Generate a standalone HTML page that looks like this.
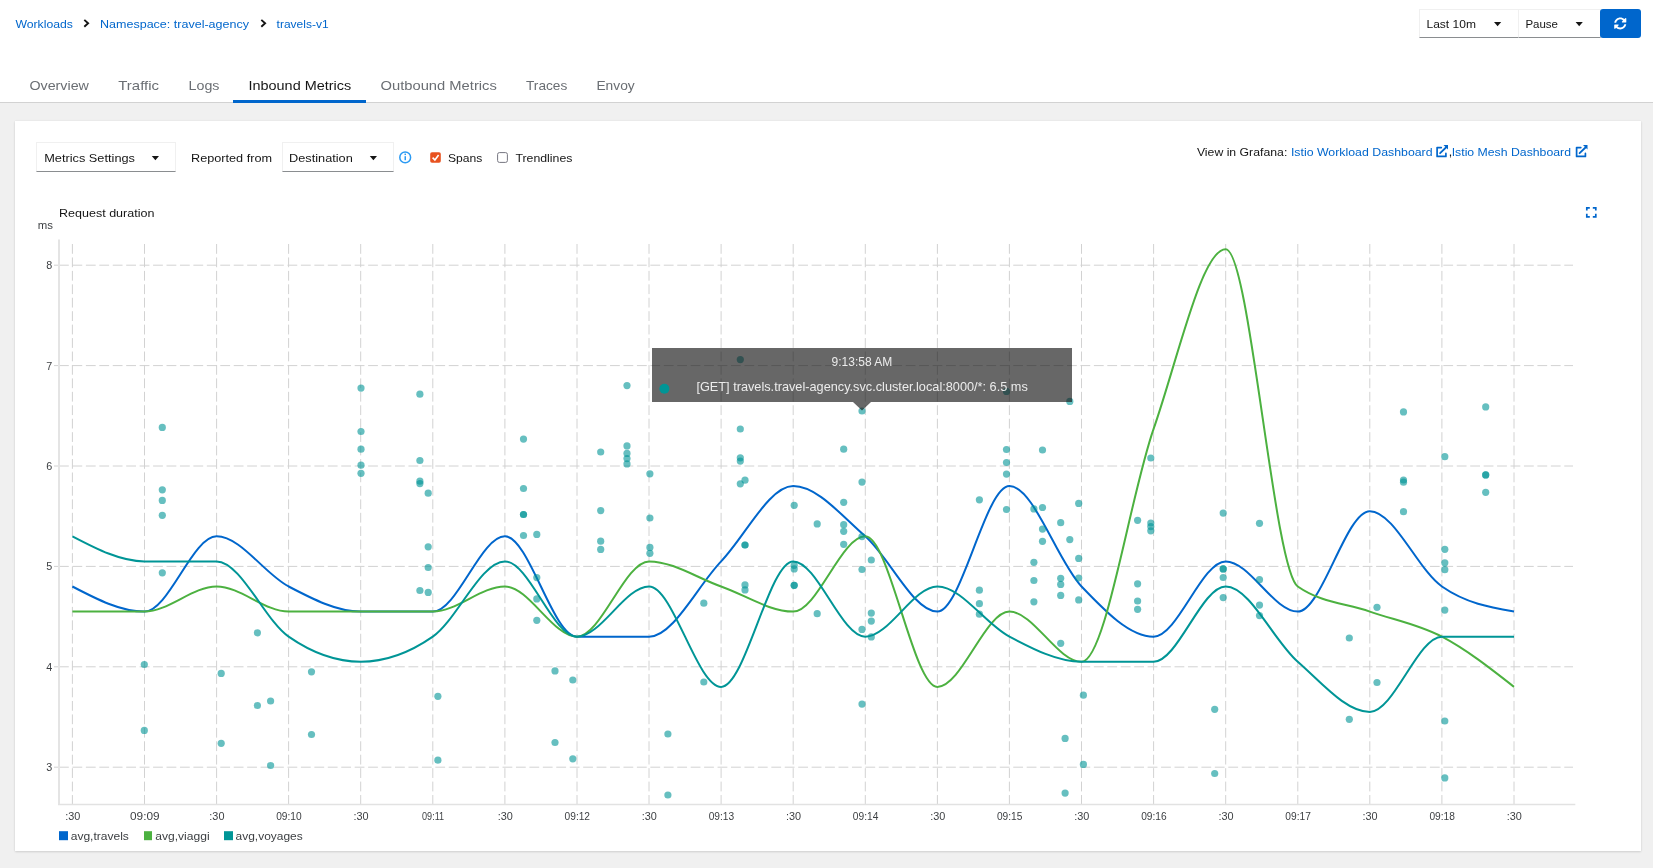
<!DOCTYPE html>
<html><head><meta charset="utf-8"><title>Kiali - travels-v1 Inbound Metrics</title>
<style>
html,body{margin:0;padding:0;}
body{width:1653px;height:868px;overflow:hidden;position:relative;background:#f0f0f0;font-family:"Liberation Sans",sans-serif;}
.top{position:absolute;left:0;top:0;width:1653px;height:102px;background:#fff;border-bottom:1px solid #d2d2d2;}
.card{position:absolute;left:15px;top:121px;width:1626px;height:730px;background:#fff;box-shadow:0 1px 2px rgba(3,3,3,0.12),0 0 2px rgba(3,3,3,0.06);}
.sel{position:absolute;box-sizing:border-box;background:#fff;border:1px solid #f0f0f0;border-bottom:1px solid #8a8d90;}
.btn{position:absolute;left:1600px;top:9px;width:41px;height:29px;background:#0066cc;border-radius:3px;}
.ulbar{position:absolute;left:233px;top:100px;width:133px;height:3px;background:#0066cc;}
svg.ov{position:absolute;left:0;top:0;will-change:transform;}
</style></head><body>
<div class="top"></div>
<div class="ulbar"></div>
<div class="card"></div>
<div class="sel" style="left:1419px;top:9px;width:100px;height:29px;border-right:1px solid #f0f0f0"></div>
<div class="sel" style="left:1518px;top:9px;width:83px;height:29px;"></div>
<div class="btn"></div>
<div class="sel" style="left:36px;top:142px;width:140px;height:30px;"></div>
<div class="sel" style="left:282px;top:142px;width:112px;height:30px;"></div>

<svg class="ov" width="1653" height="868" viewBox="0 0 1653 868" style="font-family:'Liberation Sans', sans-serif">
<text x="15.4" y="28.2" font-size="11.3" fill="#0066cc" text-anchor="start" font-weight="normal" textLength="57.6" lengthAdjust="spacingAndGlyphs">Workloads</text>
<path d="M84.3,19.9 L88.1,23.3 L84.3,26.7" fill="none" stroke="#151515" stroke-width="1.9"/>
<text x="100.0" y="28.2" font-size="11.3" fill="#0066cc" text-anchor="start" font-weight="normal" textLength="149.0" lengthAdjust="spacingAndGlyphs">Namespace: travel-agency</text>
<path d="M261.3,19.9 L265.1,23.3 L261.3,26.7" fill="none" stroke="#151515" stroke-width="1.9"/>
<text x="276.6" y="28.2" font-size="11.3" fill="#0066cc" text-anchor="start" font-weight="normal" textLength="52.0" lengthAdjust="spacingAndGlyphs">travels-v1</text>
<text x="29.4" y="89.9" font-size="13.6" fill="#6a6e73" text-anchor="start" font-weight="normal" textLength="59.5" lengthAdjust="spacingAndGlyphs">Overview</text>
<text x="118.3" y="89.9" font-size="13.6" fill="#6a6e73" text-anchor="start" font-weight="normal" textLength="40.7" lengthAdjust="spacingAndGlyphs">Traffic</text>
<text x="188.6" y="89.9" font-size="13.6" fill="#6a6e73" text-anchor="start" font-weight="normal" textLength="30.9" lengthAdjust="spacingAndGlyphs">Logs</text>
<text x="248.5" y="89.9" font-size="13.6" fill="#151515" text-anchor="start" font-weight="normal" textLength="102.7" lengthAdjust="spacingAndGlyphs">Inbound Metrics</text>
<text x="380.5" y="89.9" font-size="13.6" fill="#6a6e73" text-anchor="start" font-weight="normal" textLength="116.3" lengthAdjust="spacingAndGlyphs">Outbound Metrics</text>
<text x="526.0" y="89.9" font-size="13.6" fill="#6a6e73" text-anchor="start" font-weight="normal" textLength="41.3" lengthAdjust="spacingAndGlyphs">Traces</text>
<text x="596.4" y="89.9" font-size="13.6" fill="#6a6e73" text-anchor="start" font-weight="normal" textLength="38.3" lengthAdjust="spacingAndGlyphs">Envoy</text>
<text x="1426.5" y="27.9" font-size="11.4" fill="#151515" text-anchor="start" font-weight="normal" textLength="49.4" lengthAdjust="spacingAndGlyphs">Last 10m</text>
<path d="M1494,22 L1501.2,22 L1497.6,26.3 Z" fill="#151515"/>
<text x="1525.4" y="27.9" font-size="11.4" fill="#151515" text-anchor="start" font-weight="normal" textLength="32.6" lengthAdjust="spacingAndGlyphs">Pause</text>
<path d="M1575.6,22 L1582.8,22 L1579.2,26.3 Z" fill="#151515"/>
<g transform="translate(1614,17.2) scale(0.0244)"><path fill="#fff" d="M370.72 133.28C339.458 104.008 298.888 87.962 255.848 88c-77.458.068-144.328 53.178-162.791 126.85-1.344 5.363-6.122 9.15-11.651 9.15H24.103c-7.498 0-13.194-6.807-11.807-14.176C33.933 94.924 134.813 8 256 8c66.448 0 126.791 26.136 171.315 68.685L463.03 40.97C478.149 25.851 504 36.559 504 57.941V192c0 13.255-10.745 24-24 24H345.941c-21.382 0-32.090-25.851-16.971-40.971l41.75-41.749zM32 296h134.059c21.382 0 32.090 25.851 16.971 40.971l-41.75 41.750c31.262 29.273 71.835 45.319 114.876 45.280 77.418-.07 144.315-53.144 162.787-126.849 1.344-5.363 6.122-9.150 11.651-9.150h57.304c7.498 0 13.194 6.807 11.807 14.176C478.067 417.076 377.187 504 256 504c-66.448 0-126.791-26.136-171.315-68.685L48.970 471.030C33.851 486.149 8 475.441 8 454.059V320c0-13.255 10.745-24 24-24z"/></g>
<text x="44.2" y="162.0" font-size="11.4" fill="#151515" text-anchor="start" font-weight="normal" textLength="90.8" lengthAdjust="spacingAndGlyphs">Metrics Settings</text>
<path d="M151.8,156 L159,156 L155.4,160.3 Z" fill="#151515"/>
<text x="191.0" y="162.0" font-size="11.4" fill="#151515" text-anchor="start" font-weight="normal" textLength="81.0" lengthAdjust="spacingAndGlyphs">Reported from</text>
<text x="289.0" y="162.0" font-size="11.4" fill="#151515" text-anchor="start" font-weight="normal" textLength="63.8" lengthAdjust="spacingAndGlyphs">Destination</text>
<path d="M369.8,156 L377,156 L373.4,160.3 Z" fill="#151515"/>
<circle cx="405.2" cy="157.4" r="5.4" fill="none" stroke="#2b9af3" stroke-width="1.5"/>
<rect x="404.5" y="156.2" width="1.5" height="4" fill="#2b9af3"/><rect x="404.5" y="153.6" width="1.5" height="1.5" fill="#2b9af3"/>
<rect x="430.2" y="152.2" width="10.6" height="10.6" rx="1.8" fill="#e8521f"/>
<path d="M432.6,157.6 L434.9,160 L438.6,155" fill="none" stroke="#fff" stroke-width="1.6"/>
<text x="448.0" y="162.0" font-size="11.4" fill="#151515" text-anchor="start" font-weight="normal" textLength="34.4" lengthAdjust="spacingAndGlyphs">Spans</text>
<rect x="497.6" y="152.6" width="9.8" height="9.8" rx="1.8" fill="#fff" stroke="#767680" stroke-width="1"/>
<text x="515.4" y="162.0" font-size="11.4" fill="#151515" text-anchor="start" font-weight="normal" textLength="57.0" lengthAdjust="spacingAndGlyphs">Trendlines</text>
<text x="1196.9" y="156.3" font-size="11.3" fill="#151515" text-anchor="start" font-weight="normal" textLength="90.4" lengthAdjust="spacingAndGlyphs">View in Grafana:</text>
<text x="1290.9" y="156.3" font-size="11.3" fill="#0066cc" text-anchor="start" font-weight="normal" textLength="141.7" lengthAdjust="spacingAndGlyphs">Istio Workload Dashboard</text>
<path d="M1441.3,147.6 H1437.1 V156.4 H1445.9 V153.4" fill="none" stroke="#0066cc" stroke-width="1.7" stroke-linecap="round" stroke-linejoin="round"/><path d="M1440.1,153.2 L1446.5,147.0" stroke="#0066cc" stroke-width="1.8" stroke-linecap="round"/><path d="M1443.5,144.9 H1448.0 V149.4 Z" fill="#0066cc"/>
<text x="1448.8" y="156.3" font-size="12.5" fill="#151515" text-anchor="start" font-weight="normal">,</text>
<text x="1451.7" y="156.3" font-size="11.3" fill="#0066cc" text-anchor="start" font-weight="normal" textLength="119.3" lengthAdjust="spacingAndGlyphs">Istio Mesh Dashboard</text>
<path d="M1580.8,147.6 H1576.6 V156.4 H1585.4 V153.4" fill="none" stroke="#0066cc" stroke-width="1.7" stroke-linecap="round" stroke-linejoin="round"/><path d="M1579.6,153.2 L1586.0,147.0" stroke="#0066cc" stroke-width="1.8" stroke-linecap="round"/><path d="M1583.0,144.9 H1587.5 V149.4 Z" fill="#0066cc"/>
<path d="M1586.8,210.6 V207.8 H1589.8 M1592.8,207.8 H1595.8 V210.6 M1595.8,213.8 V216.8 H1592.8 M1589.8,216.8 H1586.8 V213.8" fill="none" stroke="#0066cc" stroke-width="1.7"/>
<text x="59.0" y="217.0" font-size="11.4" fill="#151515" text-anchor="start" font-weight="normal" textLength="95.4" lengthAdjust="spacingAndGlyphs">Request duration</text>
<text x="37.8" y="229.0" font-size="11" fill="#3c3f42" text-anchor="start" font-weight="normal" textLength="15.2" lengthAdjust="spacingAndGlyphs">ms</text>
<line x1="54" y1="767.2" x2="59" y2="767.2" stroke="#d2d2d2" stroke-width="1"/>
<line x1="59" y1="767.2" x2="1573" y2="767.2" stroke="#d2d2d2" stroke-width="1" stroke-dasharray="9.8,3.64"/>
<text x="52.2" y="771.1" font-size="10.8" fill="#3c3f42" text-anchor="end" font-weight="normal">3</text>
<line x1="54" y1="666.8" x2="59" y2="666.8" stroke="#d2d2d2" stroke-width="1"/>
<line x1="59" y1="666.8" x2="1573" y2="666.8" stroke="#d2d2d2" stroke-width="1" stroke-dasharray="9.8,3.64"/>
<text x="52.2" y="670.7" font-size="10.8" fill="#3c3f42" text-anchor="end" font-weight="normal">4</text>
<line x1="54" y1="566.4" x2="59" y2="566.4" stroke="#d2d2d2" stroke-width="1"/>
<line x1="59" y1="566.4" x2="1573" y2="566.4" stroke="#d2d2d2" stroke-width="1" stroke-dasharray="9.8,3.64"/>
<text x="52.2" y="570.3" font-size="10.8" fill="#3c3f42" text-anchor="end" font-weight="normal">5</text>
<line x1="54" y1="466.0" x2="59" y2="466.0" stroke="#d2d2d2" stroke-width="1"/>
<line x1="59" y1="466.0" x2="1573" y2="466.0" stroke="#d2d2d2" stroke-width="1" stroke-dasharray="9.8,3.64"/>
<text x="52.2" y="469.9" font-size="10.8" fill="#3c3f42" text-anchor="end" font-weight="normal">6</text>
<line x1="54" y1="365.6" x2="59" y2="365.6" stroke="#d2d2d2" stroke-width="1"/>
<line x1="59" y1="365.6" x2="1573" y2="365.6" stroke="#d2d2d2" stroke-width="1" stroke-dasharray="9.8,3.64"/>
<text x="52.2" y="369.5" font-size="10.8" fill="#3c3f42" text-anchor="end" font-weight="normal">7</text>
<line x1="54" y1="265.2" x2="59" y2="265.2" stroke="#d2d2d2" stroke-width="1"/>
<line x1="59" y1="265.2" x2="1573" y2="265.2" stroke="#d2d2d2" stroke-width="1" stroke-dasharray="9.8,3.64"/>
<text x="52.2" y="269.1" font-size="10.8" fill="#3c3f42" text-anchor="end" font-weight="normal">8</text>
<line x1="72.4" y1="244" x2="72.4" y2="808.5" stroke="#d2d2d2" stroke-width="1" stroke-dasharray="9.8,3.64"/>
<text x="72.7" y="820.0" font-size="10.8" fill="#3c3f42" text-anchor="middle" font-weight="normal" textLength="15.1" lengthAdjust="spacingAndGlyphs">:30</text>
<line x1="144.5" y1="244" x2="144.5" y2="808.5" stroke="#d2d2d2" stroke-width="1" stroke-dasharray="9.8,3.64"/>
<text x="144.8" y="820.0" font-size="10.8" fill="#3c3f42" text-anchor="middle" font-weight="normal" textLength="29.6" lengthAdjust="spacingAndGlyphs">09:09</text>
<line x1="216.6" y1="244" x2="216.6" y2="808.5" stroke="#d2d2d2" stroke-width="1" stroke-dasharray="9.8,3.64"/>
<text x="216.9" y="820.0" font-size="10.8" fill="#3c3f42" text-anchor="middle" font-weight="normal" textLength="15.1" lengthAdjust="spacingAndGlyphs">:30</text>
<line x1="288.6" y1="244" x2="288.6" y2="808.5" stroke="#d2d2d2" stroke-width="1" stroke-dasharray="9.8,3.64"/>
<text x="288.9" y="820.0" font-size="10.8" fill="#3c3f42" text-anchor="middle" font-weight="normal" textLength="25.5" lengthAdjust="spacingAndGlyphs">09:10</text>
<line x1="360.7" y1="244" x2="360.7" y2="808.5" stroke="#d2d2d2" stroke-width="1" stroke-dasharray="9.8,3.64"/>
<text x="361.0" y="820.0" font-size="10.8" fill="#3c3f42" text-anchor="middle" font-weight="normal" textLength="15.1" lengthAdjust="spacingAndGlyphs">:30</text>
<line x1="432.8" y1="244" x2="432.8" y2="808.5" stroke="#d2d2d2" stroke-width="1" stroke-dasharray="9.8,3.64"/>
<text x="433.1" y="820.0" font-size="10.8" fill="#3c3f42" text-anchor="middle" font-weight="normal" textLength="22.1" lengthAdjust="spacingAndGlyphs">09:11</text>
<line x1="504.9" y1="244" x2="504.9" y2="808.5" stroke="#d2d2d2" stroke-width="1" stroke-dasharray="9.8,3.64"/>
<text x="505.2" y="820.0" font-size="10.8" fill="#3c3f42" text-anchor="middle" font-weight="normal" textLength="15.1" lengthAdjust="spacingAndGlyphs">:30</text>
<line x1="577.0" y1="244" x2="577.0" y2="808.5" stroke="#d2d2d2" stroke-width="1" stroke-dasharray="9.8,3.64"/>
<text x="577.3" y="820.0" font-size="10.8" fill="#3c3f42" text-anchor="middle" font-weight="normal" textLength="25.5" lengthAdjust="spacingAndGlyphs">09:12</text>
<line x1="649.0" y1="244" x2="649.0" y2="808.5" stroke="#d2d2d2" stroke-width="1" stroke-dasharray="9.8,3.64"/>
<text x="649.3" y="820.0" font-size="10.8" fill="#3c3f42" text-anchor="middle" font-weight="normal" textLength="15.1" lengthAdjust="spacingAndGlyphs">:30</text>
<line x1="721.1" y1="244" x2="721.1" y2="808.5" stroke="#d2d2d2" stroke-width="1" stroke-dasharray="9.8,3.64"/>
<text x="721.4" y="820.0" font-size="10.8" fill="#3c3f42" text-anchor="middle" font-weight="normal" textLength="25.5" lengthAdjust="spacingAndGlyphs">09:13</text>
<line x1="793.2" y1="244" x2="793.2" y2="808.5" stroke="#d2d2d2" stroke-width="1" stroke-dasharray="9.8,3.64"/>
<text x="793.5" y="820.0" font-size="10.8" fill="#3c3f42" text-anchor="middle" font-weight="normal" textLength="15.1" lengthAdjust="spacingAndGlyphs">:30</text>
<line x1="865.3" y1="244" x2="865.3" y2="808.5" stroke="#d2d2d2" stroke-width="1" stroke-dasharray="9.8,3.64"/>
<text x="865.6" y="820.0" font-size="10.8" fill="#3c3f42" text-anchor="middle" font-weight="normal" textLength="25.5" lengthAdjust="spacingAndGlyphs">09:14</text>
<line x1="937.4" y1="244" x2="937.4" y2="808.5" stroke="#d2d2d2" stroke-width="1" stroke-dasharray="9.8,3.64"/>
<text x="937.7" y="820.0" font-size="10.8" fill="#3c3f42" text-anchor="middle" font-weight="normal" textLength="15.1" lengthAdjust="spacingAndGlyphs">:30</text>
<line x1="1009.4" y1="244" x2="1009.4" y2="808.5" stroke="#d2d2d2" stroke-width="1" stroke-dasharray="9.8,3.64"/>
<text x="1009.7" y="820.0" font-size="10.8" fill="#3c3f42" text-anchor="middle" font-weight="normal" textLength="25.5" lengthAdjust="spacingAndGlyphs">09:15</text>
<line x1="1081.5" y1="244" x2="1081.5" y2="808.5" stroke="#d2d2d2" stroke-width="1" stroke-dasharray="9.8,3.64"/>
<text x="1081.8" y="820.0" font-size="10.8" fill="#3c3f42" text-anchor="middle" font-weight="normal" textLength="15.1" lengthAdjust="spacingAndGlyphs">:30</text>
<line x1="1153.6" y1="244" x2="1153.6" y2="808.5" stroke="#d2d2d2" stroke-width="1" stroke-dasharray="9.8,3.64"/>
<text x="1153.9" y="820.0" font-size="10.8" fill="#3c3f42" text-anchor="middle" font-weight="normal" textLength="25.5" lengthAdjust="spacingAndGlyphs">09:16</text>
<line x1="1225.7" y1="244" x2="1225.7" y2="808.5" stroke="#d2d2d2" stroke-width="1" stroke-dasharray="9.8,3.64"/>
<text x="1226.0" y="820.0" font-size="10.8" fill="#3c3f42" text-anchor="middle" font-weight="normal" textLength="15.1" lengthAdjust="spacingAndGlyphs">:30</text>
<line x1="1297.8" y1="244" x2="1297.8" y2="808.5" stroke="#d2d2d2" stroke-width="1" stroke-dasharray="9.8,3.64"/>
<text x="1298.1" y="820.0" font-size="10.8" fill="#3c3f42" text-anchor="middle" font-weight="normal" textLength="25.5" lengthAdjust="spacingAndGlyphs">09:17</text>
<line x1="1369.8" y1="244" x2="1369.8" y2="808.5" stroke="#d2d2d2" stroke-width="1" stroke-dasharray="9.8,3.64"/>
<text x="1370.1" y="820.0" font-size="10.8" fill="#3c3f42" text-anchor="middle" font-weight="normal" textLength="15.1" lengthAdjust="spacingAndGlyphs">:30</text>
<line x1="1441.9" y1="244" x2="1441.9" y2="808.5" stroke="#d2d2d2" stroke-width="1" stroke-dasharray="9.8,3.64"/>
<text x="1442.2" y="820.0" font-size="10.8" fill="#3c3f42" text-anchor="middle" font-weight="normal" textLength="25.5" lengthAdjust="spacingAndGlyphs">09:18</text>
<line x1="1514.0" y1="244" x2="1514.0" y2="808.5" stroke="#d2d2d2" stroke-width="1" stroke-dasharray="9.8,3.64"/>
<text x="1514.3" y="820.0" font-size="10.8" fill="#3c3f42" text-anchor="middle" font-weight="normal" textLength="15.1" lengthAdjust="spacingAndGlyphs">:30</text>
<line x1="59" y1="239.5" x2="59" y2="805" stroke="#e4e4e4" stroke-width="2"/>
<line x1="58" y1="804.5" x2="1575.3" y2="804.5" stroke="#e2e2e2" stroke-width="1.6"/>
<path d="M72.40,586.48 C96.43,599.03 120.45,611.58 144.48,611.58 C168.51,611.58 192.53,536.28 216.56,536.28 C240.59,536.28 264.61,573.93 288.64,586.48 C312.67,599.03 336.69,611.58 360.72,611.58 C384.75,611.58 408.77,611.58 432.80,611.58 C456.83,611.58 480.85,536.28 504.88,536.28 C528.91,536.28 552.93,636.68 576.96,636.68 C600.99,636.68 625.01,636.68 649.04,636.68 C673.07,636.68 697.09,586.48 721.12,561.38 C745.15,536.28 769.17,486.08 793.20,486.08 C817.23,486.08 841.25,515.36 865.28,536.28 C889.31,557.20 913.33,611.58 937.36,611.58 C961.39,611.58 985.41,486.08 1009.44,486.08 C1033.47,486.08 1057.49,561.38 1081.52,586.48 C1105.55,611.58 1129.57,636.68 1153.60,636.68 C1177.63,636.68 1201.65,561.38 1225.68,561.38 C1249.71,561.38 1273.73,611.58 1297.76,611.58 C1321.79,611.58 1345.81,511.18 1369.84,511.18 C1393.87,511.18 1417.89,569.75 1441.92,586.48 C1465.95,603.21 1489.97,607.40 1514.00,611.58" fill="none" stroke="#0066cc" stroke-width="2"/>
<path d="M72.40,611.58 C96.43,611.58 120.45,611.58 144.48,611.58 C168.51,611.58 192.53,586.48 216.56,586.48 C240.59,586.48 264.61,611.58 288.64,611.58 C312.67,611.58 336.69,611.58 360.72,611.58 C384.75,611.58 408.77,611.58 432.80,611.58 C456.83,611.58 480.85,586.48 504.88,586.48 C528.91,586.48 552.93,636.68 576.96,636.68 C600.99,636.68 625.01,561.38 649.04,561.38 C673.07,561.38 697.09,578.11 721.12,586.48 C745.15,594.85 769.17,611.58 793.20,611.58 C817.23,611.58 841.25,536.28 865.28,536.28 C889.31,536.28 913.33,686.88 937.36,686.88 C961.39,686.88 985.41,611.58 1009.44,611.58 C1033.47,611.58 1057.49,661.78 1081.52,661.78 C1105.55,661.78 1129.57,497.63 1153.60,428.85 C1177.63,360.08 1201.65,249.14 1225.68,249.14 C1249.71,249.14 1273.73,569.75 1297.76,586.48 C1321.79,603.21 1345.81,603.21 1369.84,611.58 C1393.87,619.95 1417.89,624.13 1441.92,636.68 C1465.95,649.23 1489.97,668.05 1514.00,686.88" fill="none" stroke="#4cb140" stroke-width="2"/>
<path d="M72.40,536.28 C96.43,548.83 120.45,561.38 144.48,561.38 C168.51,561.38 192.53,561.38 216.56,561.38 C240.59,561.38 264.61,619.95 288.64,636.68 C312.67,653.41 336.69,661.78 360.72,661.78 C384.75,661.78 408.77,653.41 432.80,636.68 C456.83,619.95 480.85,561.38 504.88,561.38 C528.91,561.38 552.93,636.68 576.96,636.68 C600.99,636.68 625.01,586.48 649.04,586.48 C673.07,586.48 697.09,686.88 721.12,686.88 C745.15,686.88 769.17,561.38 793.20,561.38 C817.23,561.38 841.25,636.68 865.28,636.68 C889.31,636.68 913.33,586.48 937.36,586.48 C961.39,586.48 985.41,624.13 1009.44,636.68 C1033.47,649.23 1057.49,661.78 1081.52,661.78 C1105.55,661.78 1129.57,661.78 1153.60,661.78 C1177.63,661.78 1201.65,586.48 1225.68,586.48 C1249.71,586.48 1273.73,640.86 1297.76,661.78 C1321.79,682.70 1345.81,711.98 1369.84,711.98 C1393.87,711.98 1417.89,636.68 1441.92,636.68 C1465.95,636.68 1489.97,636.68 1514.00,636.68" fill="none" stroke="#009596" stroke-width="2"/>
<g fill="#009596" fill-opacity="0.6">
<circle cx="144.3" cy="664.5" r="3.6"/>
<circle cx="144.3" cy="730.4" r="3.6"/>
<circle cx="162.3" cy="427.4" r="3.6"/>
<circle cx="162.3" cy="489.8" r="3.6"/>
<circle cx="162.3" cy="500.4" r="3.6"/>
<circle cx="162.3" cy="515.3" r="3.6"/>
<circle cx="162.3" cy="572.8" r="3.6"/>
<circle cx="221.2" cy="673.4" r="3.6"/>
<circle cx="221.2" cy="743.3" r="3.6"/>
<circle cx="257.4" cy="632.8" r="3.6"/>
<circle cx="257.4" cy="705.5" r="3.6"/>
<circle cx="270.6" cy="701.0" r="3.6"/>
<circle cx="270.6" cy="765.5" r="3.6"/>
<circle cx="311.5" cy="671.8" r="3.6"/>
<circle cx="311.5" cy="734.5" r="3.6"/>
<circle cx="361.0" cy="388.1" r="3.6"/>
<circle cx="361.0" cy="431.5" r="3.6"/>
<circle cx="361.0" cy="449.2" r="3.6"/>
<circle cx="361.0" cy="465.2" r="3.6"/>
<circle cx="361.0" cy="473.3" r="3.6"/>
<circle cx="419.9" cy="394.2" r="3.6"/>
<circle cx="419.9" cy="460.5" r="3.6"/>
<circle cx="419.9" cy="481.2" r="3.6"/>
<circle cx="419.9" cy="483.6" r="3.6"/>
<circle cx="419.9" cy="590.5" r="3.6"/>
<circle cx="428.2" cy="493.2" r="3.6"/>
<circle cx="428.2" cy="546.8" r="3.6"/>
<circle cx="428.2" cy="567.5" r="3.6"/>
<circle cx="428.2" cy="592.4" r="3.6"/>
<circle cx="437.9" cy="696.3" r="3.6"/>
<circle cx="437.9" cy="760.2" r="3.6"/>
<circle cx="523.5" cy="439.1" r="3.6"/>
<circle cx="523.5" cy="488.5" r="3.6"/>
<circle cx="523.5" cy="514.5" r="3.6"/>
<circle cx="523.5" cy="514.5" r="3.6"/>
<circle cx="523.5" cy="535.5" r="3.6"/>
<circle cx="536.8" cy="534.4" r="3.6"/>
<circle cx="536.8" cy="577.6" r="3.6"/>
<circle cx="536.8" cy="598.9" r="3.6"/>
<circle cx="536.8" cy="620.3" r="3.6"/>
<circle cx="555.0" cy="670.9" r="3.6"/>
<circle cx="555.0" cy="742.5" r="3.6"/>
<circle cx="572.8" cy="680.0" r="3.6"/>
<circle cx="572.8" cy="758.8" r="3.6"/>
<circle cx="600.7" cy="452.0" r="3.6"/>
<circle cx="600.7" cy="510.6" r="3.6"/>
<circle cx="600.7" cy="541.2" r="3.6"/>
<circle cx="600.7" cy="549.4" r="3.6"/>
<circle cx="627.0" cy="385.6" r="3.6"/>
<circle cx="627.0" cy="445.9" r="3.6"/>
<circle cx="627.0" cy="453.4" r="3.6"/>
<circle cx="627.0" cy="458.6" r="3.6"/>
<circle cx="627.0" cy="463.9" r="3.6"/>
<circle cx="649.9" cy="473.8" r="3.6"/>
<circle cx="649.9" cy="518.0" r="3.6"/>
<circle cx="649.9" cy="547.4" r="3.6"/>
<circle cx="649.9" cy="553.3" r="3.6"/>
<circle cx="667.9" cy="734.0" r="3.6"/>
<circle cx="667.9" cy="795.0" r="3.6"/>
<circle cx="703.8" cy="603.2" r="3.6"/>
<circle cx="703.8" cy="682.0" r="3.6"/>
<circle cx="740.3" cy="359.6" r="3.6"/>
<circle cx="740.3" cy="429.0" r="3.6"/>
<circle cx="740.3" cy="457.8" r="3.6"/>
<circle cx="740.3" cy="461.1" r="3.6"/>
<circle cx="740.3" cy="483.8" r="3.6"/>
<circle cx="745.0" cy="480.2" r="3.6"/>
<circle cx="745.0" cy="545.0" r="3.6"/>
<circle cx="745.0" cy="545.0" r="3.6"/>
<circle cx="745.0" cy="584.9" r="3.6"/>
<circle cx="745.0" cy="589.9" r="3.6"/>
<circle cx="794.2" cy="505.3" r="3.6"/>
<circle cx="794.2" cy="565.3" r="3.6"/>
<circle cx="794.2" cy="568.9" r="3.6"/>
<circle cx="794.2" cy="585.3" r="3.6"/>
<circle cx="794.2" cy="585.3" r="3.6"/>
<circle cx="817.2" cy="523.9" r="3.6"/>
<circle cx="817.2" cy="613.7" r="3.6"/>
<circle cx="843.7" cy="449.2" r="3.6"/>
<circle cx="843.7" cy="502.3" r="3.6"/>
<circle cx="843.7" cy="524.7" r="3.6"/>
<circle cx="843.7" cy="531.3" r="3.6"/>
<circle cx="843.7" cy="544.3" r="3.6"/>
<circle cx="862.0" cy="411.0" r="3.6"/>
<circle cx="862.0" cy="482.1" r="3.6"/>
<circle cx="862.0" cy="536.6" r="3.6"/>
<circle cx="862.0" cy="569.5" r="3.6"/>
<circle cx="862.0" cy="629.4" r="3.6"/>
<circle cx="862.0" cy="704.1" r="3.6"/>
<circle cx="871.3" cy="560.0" r="3.6"/>
<circle cx="871.3" cy="613.1" r="3.6"/>
<circle cx="871.3" cy="621.1" r="3.6"/>
<circle cx="871.3" cy="636.9" r="3.6"/>
<circle cx="979.4" cy="499.8" r="3.6"/>
<circle cx="979.4" cy="590.2" r="3.6"/>
<circle cx="979.4" cy="603.7" r="3.6"/>
<circle cx="979.4" cy="614.2" r="3.6"/>
<circle cx="1006.5" cy="391.4" r="3.6"/>
<circle cx="1006.5" cy="449.5" r="3.6"/>
<circle cx="1006.5" cy="462.5" r="3.6"/>
<circle cx="1006.5" cy="474.1" r="3.6"/>
<circle cx="1006.5" cy="509.5" r="3.6"/>
<circle cx="1033.9" cy="508.9" r="3.6"/>
<circle cx="1033.9" cy="562.3" r="3.6"/>
<circle cx="1033.9" cy="580.5" r="3.6"/>
<circle cx="1033.9" cy="601.8" r="3.6"/>
<circle cx="1042.5" cy="450.0" r="3.6"/>
<circle cx="1042.5" cy="507.5" r="3.6"/>
<circle cx="1042.5" cy="529.1" r="3.6"/>
<circle cx="1042.5" cy="541.3" r="3.6"/>
<circle cx="1060.7" cy="522.7" r="3.6"/>
<circle cx="1060.7" cy="578.3" r="3.6"/>
<circle cx="1060.7" cy="584.4" r="3.6"/>
<circle cx="1060.7" cy="595.4" r="3.6"/>
<circle cx="1060.7" cy="643.3" r="3.6"/>
<circle cx="1065.1" cy="738.4" r="3.6"/>
<circle cx="1065.1" cy="793.1" r="3.6"/>
<circle cx="1069.8" cy="401.4" r="3.6"/>
<circle cx="1069.8" cy="539.6" r="3.6"/>
<circle cx="1078.7" cy="503.4" r="3.6"/>
<circle cx="1078.7" cy="558.4" r="3.6"/>
<circle cx="1078.7" cy="578.0" r="3.6"/>
<circle cx="1078.7" cy="599.9" r="3.6"/>
<circle cx="1083.4" cy="695.2" r="3.6"/>
<circle cx="1083.4" cy="764.4" r="3.6"/>
<circle cx="1137.6" cy="520.3" r="3.6"/>
<circle cx="1137.6" cy="583.8" r="3.6"/>
<circle cx="1137.6" cy="601.0" r="3.6"/>
<circle cx="1137.6" cy="609.3" r="3.6"/>
<circle cx="1150.8" cy="458.0" r="3.6"/>
<circle cx="1150.8" cy="523.0" r="3.6"/>
<circle cx="1150.8" cy="526.6" r="3.6"/>
<circle cx="1150.8" cy="530.8" r="3.6"/>
<circle cx="1214.7" cy="709.3" r="3.6"/>
<circle cx="1214.7" cy="773.5" r="3.6"/>
<circle cx="1223.2" cy="513.1" r="3.6"/>
<circle cx="1223.2" cy="568.9" r="3.6"/>
<circle cx="1223.2" cy="568.9" r="3.6"/>
<circle cx="1223.2" cy="577.5" r="3.6"/>
<circle cx="1223.2" cy="597.6" r="3.6"/>
<circle cx="1259.5" cy="523.3" r="3.6"/>
<circle cx="1259.5" cy="579.7" r="3.6"/>
<circle cx="1259.5" cy="605.1" r="3.6"/>
<circle cx="1259.5" cy="615.6" r="3.6"/>
<circle cx="1349.3" cy="638.0" r="3.6"/>
<circle cx="1349.3" cy="719.3" r="3.6"/>
<circle cx="1377.0" cy="607.3" r="3.6"/>
<circle cx="1377.0" cy="682.5" r="3.6"/>
<circle cx="1403.5" cy="411.9" r="3.6"/>
<circle cx="1403.5" cy="480.0" r="3.6"/>
<circle cx="1403.5" cy="482.2" r="3.6"/>
<circle cx="1403.5" cy="511.7" r="3.6"/>
<circle cx="1444.8" cy="456.7" r="3.6"/>
<circle cx="1444.8" cy="549.3" r="3.6"/>
<circle cx="1444.8" cy="562.8" r="3.6"/>
<circle cx="1444.8" cy="569.7" r="3.6"/>
<circle cx="1444.8" cy="610.1" r="3.6"/>
<circle cx="1444.8" cy="721.0" r="3.6"/>
<circle cx="1444.8" cy="777.9" r="3.6"/>
<circle cx="1485.7" cy="406.9" r="3.6"/>
<circle cx="1485.7" cy="474.9" r="3.6"/>
<circle cx="1485.7" cy="474.9" r="3.6"/>
<circle cx="1485.7" cy="492.3" r="3.6"/>
</g>
<rect x="59" y="831.2" width="9" height="9" fill="#0066cc"/>
<text x="70.7" y="839.6" font-size="11.5" fill="#3c3f42" text-anchor="start" font-weight="normal" textLength="58.2" lengthAdjust="spacingAndGlyphs">avg,travels</text>
<rect x="144" y="831.2" width="8" height="9" fill="#4cb140"/>
<text x="155.2" y="839.6" font-size="11.5" fill="#3c3f42" text-anchor="start" font-weight="normal" textLength="54.4" lengthAdjust="spacingAndGlyphs">avg,viaggi</text>
<rect x="224" y="831.2" width="9" height="9" fill="#009596"/>
<text x="235.6" y="839.6" font-size="11.5" fill="#3c3f42" text-anchor="start" font-weight="normal" textLength="67.1" lengthAdjust="spacingAndGlyphs">avg,voyages</text>
<g>
<path d="M652,348 H1072 V402 H871 L862,410.5 L853,402 H652 Z" fill="#151515" fill-opacity="0.65"/>
<text x="831.6" y="366.0" font-size="12.2" fill="#ececec" text-anchor="start" font-weight="normal" textLength="60.7" lengthAdjust="spacingAndGlyphs">9:13:58 AM</text>
<circle cx="664.4" cy="388.7" r="5" fill="#009596"/>
<text x="696.4" y="391.4" font-size="12.2" fill="#ececec" text-anchor="start" font-weight="normal" textLength="331.4" lengthAdjust="spacingAndGlyphs">[GET] travels.travel-agency.svc.cluster.local:8000/*: 6.5 ms</text>
</g>
</svg>
</body></html>
